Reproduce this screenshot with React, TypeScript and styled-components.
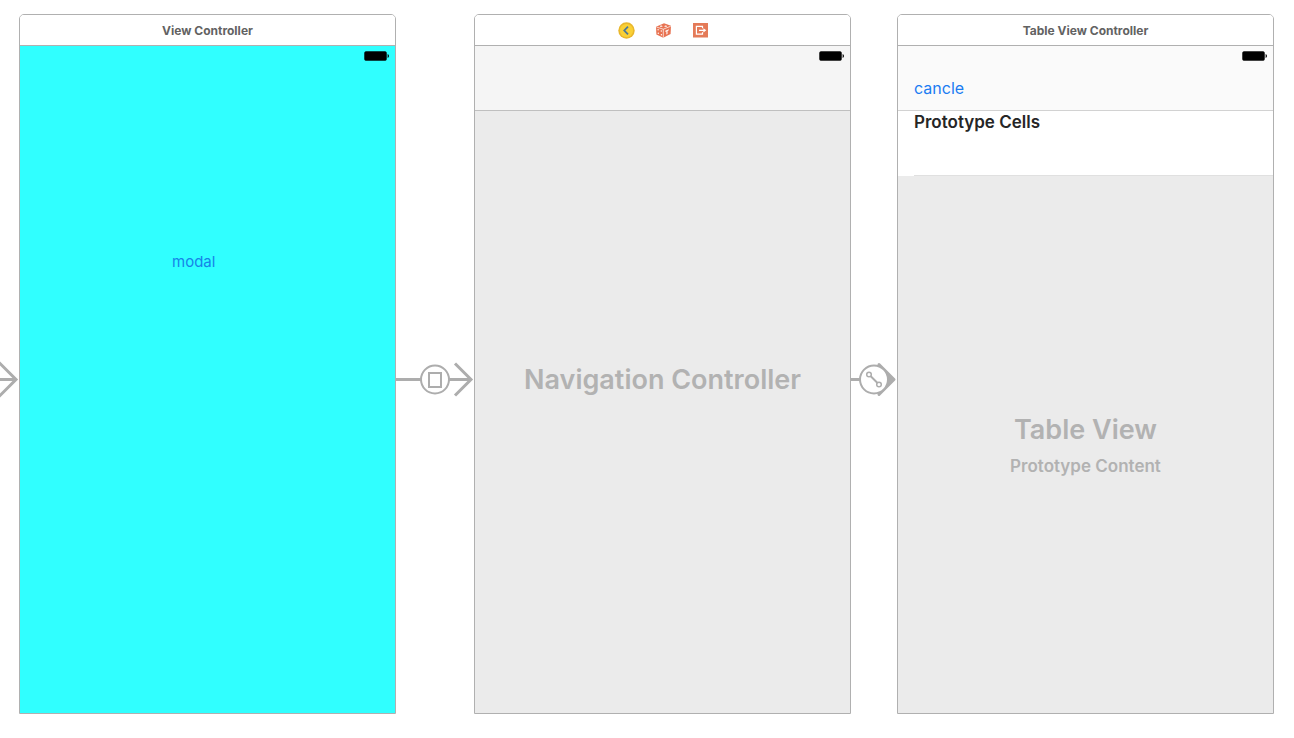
import React from 'react';
import styled, { createGlobalStyle } from 'styled-components';

const line = '#b0b0b0';
const wire = '#adadad';

const GlobalStyle = createGlobalStyle`
  *, *::before, *::after { box-sizing: border-box; }
  body {
    margin: 0;
    background: #ffffff;
    font-family: Inter, "Liberation Sans", sans-serif;
  }
  h1, h2, h3, p { margin: 0; }
  button {
    border: 0;
    padding: 0;
    background: none;
    font: inherit;
    cursor: pointer;
  }
  svg { display: block; }
`;

const Storyboard = styled.main`
  display: grid;
  grid-template-columns: 19px 1fr 78px 1fr 46px 1fr;
  min-height: 100vh;
  padding: 14px 20px 24px 0;
`;

const Scene = styled.section`
  display: flex;
  flex-direction: column;
  min-width: 0;
  border: 1px solid ${line};
  border-radius: 5px 5px 0 0;
  overflow: hidden;
`;

const SceneHeader = styled.header`
  display: flex;
  align-items: center;
  justify-content: center;
  height: 31px;
  border-bottom: 1px solid ${line};
  background: #ffffff;
`;

const SceneTitle = styled.h2`
  padding-top: 1px;
  font-size: 12px;
  line-height: 16px;
  font-weight: 700;
  color: #626262;
`;

const Dock = styled.div`
  display: flex;
  gap: 20px;
  padding-left: 2px;
`;

const DockButton = styled.button`
  display: block;
  width: 17px;
  height: 17px;
`;

const Canvas = styled.div<{ $fill: string }>`
  flex: 1;
  display: flex;
  flex-direction: column;
  background: ${(p) => p.$fill};
`;

const StatusBar = styled.div`
  display: flex;
  justify-content: flex-end;
  height: 20px;
  padding: 5px 6px 0 0;
`;

const NavBar = styled.div<{ $fill: string; $edge: string }>`
  height: 65px;
  border-bottom: 1px solid ${(p) => p.$edge};
  background: ${(p) => p.$fill};
`;

const NavItems = styled.div`
  display: flex;
  align-items: center;
  height: 44px;
  padding: 0 16px;
`;

const LinkButton = styled.button<{ $size: number; $tint: string }>`
  font-size: ${(p) => p.$size}px;
  line-height: 20px;
  color: ${(p) => p.$tint};
`;

const ViewContent = styled.div`
  padding: 185px 0 0 152px;
`;

const PrototypeCell = styled.div`
  height: 65px;
  padding-left: 16px;
  background: #ffffff;
`;

const CellLabel = styled.h3`
  height: 65px;
  border-bottom: 1px solid #e0e0e0;
  font-size: 17px;
  line-height: 22px;
  font-weight: 600;
  color: #262626;
`;

const Placeholder = styled.div<{ $nudge: number }>`
  flex: 1;
  display: flex;
  flex-direction: column;
  align-items: center;
  justify-content: center;
  gap: 8px;
  padding-bottom: ${(p) => p.$nudge}px;
  font-weight: 600;
  color: #b2b2b2;
`;

const PlaceholderTitle = styled.p`
  font-size: 27px;
  line-height: 36px;
`;

const PlaceholderNote = styled.p`
  font-size: 17px;
  line-height: 20px;
`;

const Connector = styled.div`
  display: flex;
  align-items: center;
  padding-top: 31px;
`;

const Battery = () => (
  <svg width="25" height="10" viewBox="0 0 25 10" role="img" aria-label="Battery full">
    <rect x="0.5" y="0.5" width="22" height="9" rx="1.5" fill="#000" stroke="#000" strokeOpacity="0.45" />
    <path d="M23.6 3 Q25 3.4 25 5 Q25 6.6 23.6 7 Z" fill="#000" />
  </svg>
);

const ControllerIcon = () => (
  <svg width="17" height="17" viewBox="0 0 17 17" aria-hidden="true">
    <circle cx="8.5" cy="8.5" r="8.2" fill="#e9b72c" />
    <circle cx="8.5" cy="8.5" r="6.6" fill="#fad035" />
    <path d="M10 4.6 L6.3 8.5 L10 12.4" fill="none" stroke="#4d7896" strokeWidth="1.8" />
  </svg>
);

const ResponderIcon = () => (
  <svg width="17" height="17" viewBox="0 0 17 17" aria-hidden="true">
    <path d="M1 4.7 L9 1.3 L16 3.8 L15.6 12 L8.2 15.8 L1.4 12.5 Z" fill="#e87352" />
    <path d="M1.4 5 L8.3 7.2 L15.8 4.2 M8.3 7.2 L8.3 15.6" fill="none" stroke="#fff" strokeWidth="0.7" />
    <g fill="#fff">
      <ellipse cx="6.2" cy="4.2" rx="1.3" ry="0.6" />
      <ellipse cx="10.7" cy="4.2" rx="1.3" ry="0.6" />
      <circle cx="3.1" cy="7.8" r="0.7" />
      <circle cx="6.3" cy="9" r="0.7" />
      <circle cx="3.3" cy="11.3" r="0.7" />
      <circle cx="6.4" cy="12.7" r="0.7" />
      <path d="M10.3 8.7 L13.8 7.2 L13.8 8.3 L12.5 8.9 L12.5 12 L11.4 12.5 L11.4 9.4 L10.3 9.8 Z" />
    </g>
  </svg>
);

const ExitIcon = () => (
  <svg width="17" height="17" viewBox="0 0 17 17" aria-hidden="true">
    <rect x="1" y="1" width="15" height="14.5" fill="#e47a58" />
    <path d="M10.5 6.3 V4.4 H4.4 V12.2 H10.5 V10.3" fill="none" stroke="#fff" strokeWidth="1.2" />
    <path d="M7 8.3 H12" stroke="#fff" strokeWidth="1.2" />
    <path d="M11.4 6.2 L14.3 8.3 L11.4 10.4 Z" fill="#fff" />
  </svg>
);

const EntryArrow = () => (
  <svg width="19" height="37" viewBox="0 -0.5 19 37" fill="none" stroke={wire} strokeWidth="3" role="img" aria-label="Initial scene">
    <path d="M0 18 H16 M-1 1 L16 18 L-1 35" />
  </svg>
);

const ModalSegue = () => (
  <svg width="78" height="37" viewBox="0 -0.5 78 37" fill="none" stroke={wire} strokeWidth="3" role="img" aria-label="Modal segue">
    <path d="M0 18 H75 M59 2 L75 18 L59 34" />
    <circle cx="39" cy="18" r="14" fill="#fff" strokeWidth="2" />
    <rect x="33" y="11.5" width="12" height="14" strokeWidth="2" />
  </svg>
);

const RootSegue = () => (
  <svg width="46" height="37" viewBox="0 -0.5 46 37" fill="none" stroke={wire} strokeWidth="3" role="img" aria-label="Root view controller segue">
    <path d="M0 18 H10" />
    <path d="M28 3 L43 18 L28 33 Z" fill={wire} strokeLinejoin="round" />
    <circle cx="23" cy="18" r="14" fill="#fff" strokeWidth="2" />
    <path d="M19.5 14.5 L26.5 21.5" strokeWidth="2" />
    <g fill="#fff" strokeWidth="1.5">
      <circle cx="18" cy="13" r="2.3" />
      <circle cx="28" cy="23" r="2.3" />
    </g>
  </svg>
);

export default function App() {
  return (
    <>
      <GlobalStyle />
      <Storyboard>
        <Connector><EntryArrow /></Connector>

        <Scene>
          <SceneHeader><SceneTitle>View Controller</SceneTitle></SceneHeader>
          <Canvas $fill="#30ffff">
            <StatusBar><Battery /></StatusBar>
            <ViewContent>
              <LinkButton type="button" $size={15} $tint="#1683e8">modal</LinkButton>
            </ViewContent>
          </Canvas>
        </Scene>

        <Connector><ModalSegue /></Connector>

        <Scene aria-label="Navigation Controller scene">
          <SceneHeader>
            <Dock>
              <DockButton type="button" aria-label="Navigation Controller"><ControllerIcon /></DockButton>
              <DockButton type="button" aria-label="First Responder"><ResponderIcon /></DockButton>
              <DockButton type="button" aria-label="Exit"><ExitIcon /></DockButton>
            </Dock>
          </SceneHeader>
          <Canvas $fill="#ebebeb">
            <NavBar $fill="#f5f5f5" $edge="#bfbfbf">
              <StatusBar><Battery /></StatusBar>
            </NavBar>
            <Placeholder $nudge={64}>
              <PlaceholderTitle>Navigation Controller</PlaceholderTitle>
            </Placeholder>
          </Canvas>
        </Scene>

        <Connector><RootSegue /></Connector>

        <Scene>
          <SceneHeader><SceneTitle>Table View Controller</SceneTitle></SceneHeader>
          <Canvas $fill="#ebebeb">
            <NavBar $fill="#fafafa" $edge="#d2d2d2">
              <StatusBar><Battery /></StatusBar>
              <NavItems>
                <LinkButton type="button" $size={16} $tint="#1a7cf2">cancle</LinkButton>
              </NavItems>
            </NavBar>
            <PrototypeCell><CellLabel>Prototype Cells</CellLabel></PrototypeCell>
            <Placeholder $nudge={2}>
              <PlaceholderTitle>Table View</PlaceholderTitle>
              <PlaceholderNote>Prototype Content</PlaceholderNote>
            </Placeholder>
          </Canvas>
        </Scene>
      </Storyboard>
    </>
  );
}
